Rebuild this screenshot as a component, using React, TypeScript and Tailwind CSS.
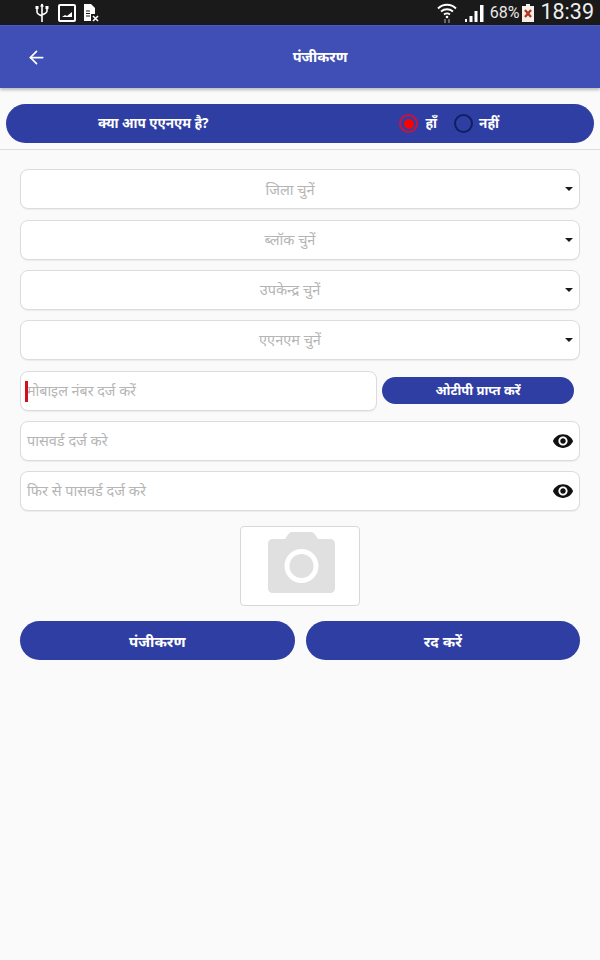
import { ArrowLeft } from 'lucide-react';

const Caret = () => <div className="w-0 h-0 border-x-[4.500px] border-x-transparent border-t-[4.500px] border-t-[#1a1a1a]" />;

const Eye = () => (
  <svg width="22" height="22" viewBox="0 0 24 24" fill="#111">
    <path d="M12 4.5C7 4.5 2.73 7.61 1 12c1.73 4.39 6 7.5 11 7.5s9.27-3.11 11-7.5c-1.73-4.39-6-7.5-11-7.5zM12 17c-2.76 0-5-2.24-5-5s2.24-5 5-5 5 2.24 5 5-2.24 5-5 5zm0-8c-1.66 0-3 1.34-3 3s1.34 3 3 3 3-1.34 3-3-1.34-3-3-3z" />
  </svg>
);

const SelectBox = ({ label }: { label: string }) => (
  <div className="relative h-10 bg-white border border-[#dcdcdc] rounded-lg flex items-center justify-center pr-[20px] shadow-[0_1px_1px_rgba(0,0,0,0.06)]">
    <span className="text-[14.500px] text-[#b5b5b5]">{label}</span>
    <div className="absolute right-[6px] top-[17px]">
      <Caret />
    </div>
  </div>
);

const PasswordBox = ({ label }: { label: string }) => (
  <div className="h-10 bg-white border border-[#dcdcdc] rounded-lg flex items-center justify-between pl-[6px] pr-[5px] shadow-[0_1px_1px_rgba(0,0,0,0.06)]">
    <span className="text-[14.500px] text-[#b5b5b5]">{label}</span>
    <Eye />
  </div>
);

const PillButton = ({ label }: { label: string }) => (
  <div className="flex-1 h-[39px] rounded-full bg-[#2f3ea2] flex items-center justify-center text-white text-[15px] font-bold">
    {label}
  </div>
);

const StatusBar = () => (
  <div className="h-[25px] bg-[#1a1a1a] flex items-center pl-[35px] pr-[6px] text-white">
    <svg width="14" height="20" viewBox="0 0 14 20" fill="none" stroke="#fff" strokeWidth="1.6">
      <path d="M7 1v18M2 5v4c0 1.500 1 2 2 2.500L7 13M12 5v3c0 1.500-1 2-2 2.500L7 12" />
      <path d="M5 3.500 7 0.500l2 3z" fill="#fff" stroke="none" />
      <rect x="0.500" y="3" width="3" height="3" fill="#fff" stroke="none" />
      <rect x="10.500" y="3" width="3" height="3" fill="#fff" stroke="none" />
    </svg>
    <svg className="ml-[9px]" width="18" height="18" viewBox="0 0 18 18" fill="none">
      <rect x="1" y="1" width="16" height="16" rx="1" stroke="#fff" strokeWidth="2" />
      <path d="M4 13l3-2 2 1 5-4v5z" fill="#fff" />
    </svg>
    <svg className="ml-[6px]" width="20" height="20" viewBox="0 0 20 20">
      <path d="M2 1h7l4 4v6H9v7H2z" fill="#fff" />
      <path d="M4 8h4M4 10.500h4M4 13h4" stroke="#1a1a1a" strokeWidth="1" />
      <path d="M11 13l5 5M16 13l-5 5" stroke="#fff" strokeWidth="1.600" />
    </svg>
    <div className="flex-1" />
    <svg width="20" height="22" viewBox="0 0 20 22" fill="none" stroke="#fff" strokeWidth="1.800">
      <path d="M1 6.500C6 1.500 14 1.500 19 6.500M4 9.500c3.500-3 8.500-3 12 0M7 12.500c2-1.500 4-1.500 6 0" />
      <circle cx="10" cy="15" r="1.300" fill="#fff" stroke="none" />
      <path d="M8 17v4M12 17v4" stroke="#888" strokeWidth="1.400" />
    </svg>
    <svg className="ml-[7px]" width="21" height="19" viewBox="0 0 21 19" fill="#fff">
      <path d="M1 16h2v3H1zM5.500 13h3v6h-3zM10.500 8h3v11h-3zM16 2h3.500v17H16z" />
    </svg>
    <span className="ml-[5px] text-[16px] text-[#e8e8e8] font-['Roboto',sans-serif]">68%</span>
    <svg className="ml-[3px]" width="12" height="18" viewBox="0 0 12 18">
      <path d="M4 0h4v2h4v16H0V2h4z" fill="#f4f0ea" />
      <path d="M3 6l6 7M9 6l-6 7" stroke="#b3361f" strokeWidth="2.400" />
    </svg>
    <span className="ml-[6px] text-[21.500px] text-[#eeeeee] font-['Roboto',sans-serif]">18:39</span>
  </div>
);

export default function App() {
  return (
    <div className="w-[600px] h-[960px] bg-[#fafafa] font-['Noto_Sans','Roboto',sans-serif] overflow-hidden">
      <StatusBar />

      <div className="h-[63px] bg-[#3f4fb5] border-t border-[#4a5bc4] shadow-[0_2px_3px_rgba(0,0,0,0.25)] flex items-center relative">
        <ArrowLeft className="ml-[26px] text-white" size={21} strokeWidth={2} />
        <span className="absolute left-[40px] right-0 text-center text-white text-[14.500px] font-bold">पंजीकरण</span>
      </div>

      <div className="mt-4 mx-[6px] h-[39px] rounded-full bg-[#2f3ea2] flex items-center text-white text-[13.500px] font-bold">
        <span className="ml-[92px]">क्या आप एएनएम है?</span>
        <div className="ml-auto mr-[95px] flex items-center">
          <div className="w-[19px] h-[19px] rounded-full border-2 border-[#c8143c] flex items-center justify-center">
            <div className="w-[10px] h-[10px] rounded-full bg-[#ff0000]" />
          </div>
          <span className="ml-[7px]">हाँ</span>
          <div className="ml-[17px] w-[19px] h-[19px] rounded-full border-2 border-[#10205f]" />
          <span className="ml-[6px]">नहीं</span>
        </div>
      </div>

      <div className="mt-[6px] h-px bg-[#dedede]" />

      <div className="mt-[19.400px] mx-[20px] flex flex-col gap-[10.300px]">
        <SelectBox label="जिला चुनें" />
        <SelectBox label="ब्लॉक चुनें" />
        <SelectBox label="उपकेन्द्र चुनें" />
        <SelectBox label="एएनएम चुनें" />

        <div className="flex items-center">
          <div className="relative w-[357px] h-10 bg-white border border-[#dcdcdc] rounded-lg flex items-center pl-[6px] shadow-[0_1px_1px_rgba(0,0,0,0.06)]">
            <span className="text-[14.300px] text-[#b5b5b5]">मोबाइल नंबर दर्ज करें</span>
            <div className="absolute left-[4px] top-[9px] w-[3px] h-[21px] bg-[#d0101c]" />
          </div>
          <div className="ml-[5px] w-[192px] h-[27px] rounded-full bg-[#2f3ea2] flex items-center justify-center text-white text-[13px] font-bold">
            ओटीपी प्राप्त करें
          </div>
        </div>

        <PasswordBox label="पासवर्ड दर्ज करे" />
        <PasswordBox label="फिर से पासवर्ड दर्ज करे" />

        <div className="mx-auto mt-[4.500px] w-[120px] h-[80px] bg-white border border-[#d8d8d8] rounded-[4px] flex items-center justify-center pb-[6px] pl-[2px]">
          <svg width="67" height="61" viewBox="0 0 67 61">
            <path d="M19 4c1-2 3-4 5-4h19c2 0 4 2 5 4l2 3h12c3 0 5 2 5 5v44c0 3-2 5-5 5H5c-3 0-5-2-5-5V12c0-3 2-5 5-5h12z" fill="#e0e0e0" />
            <circle cx="33.500" cy="34" r="14.500" fill="none" stroke="#fff" strokeWidth="5" />
          </svg>
        </div>

        <div className="mt-[5px] flex gap-[11px]">
          <PillButton label="पंजीकरण" />
          <PillButton label="रद करें" />
        </div>
      </div>
    </div>
  );
}
